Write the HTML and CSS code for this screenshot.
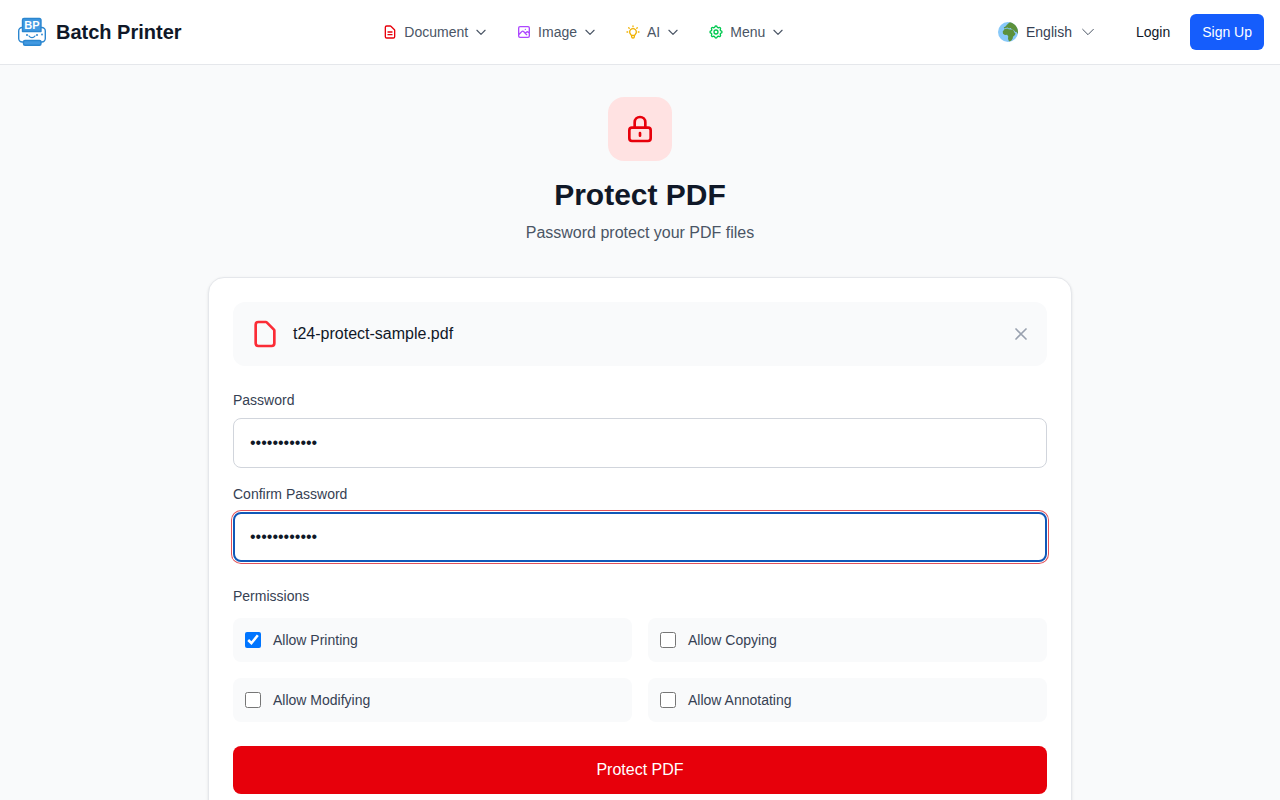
FILE: index.html
```html
<!DOCTYPE html>
<html lang="en">
<head>
    <meta charset="UTF-8">
    <meta name="viewport" content="width=device-width, initial-scale=1.0">
    <title>Protect PDF - Batch Printer</title>
    <link rel="stylesheet" href="styles.css">
</head>
<body>
    <header class="header">
        <a class="brand" href="#">
            <svg class="brand-logo" viewBox="0 0 32 32" fill="none" stroke="#2b86cf" stroke-width="1.4" stroke-linejoin="round" stroke-linecap="round" aria-hidden="true">
                <rect x="2.700" y="11.500" width="26.600" height="14.500" rx="3.500" fill="#fff"/>
                <path d="M6.500 15.500V4a1.500 1.500 0 0 1 1.500-1.500h15.500A1.500 1.500 0 0 1 25 4v11.500z" fill="#4299e1"/>
                <path d="M13 20c1.500 2.200 4.500 2.200 6 0" stroke-width="1.200"/>
                <g fill="#2b86cf" stroke="none">
                    <circle cx="11" cy="19" r="1"/>
                    <circle cx="21" cy="19" r="1"/>
                    <circle cx="26" cy="18.500" r=".9"/>
                </g>
                <rect x="7.500" y="24.500" width="17.500" height="4.800" rx="1.500" fill="#4299e1"/>
                <text class="logo-text" x="16" y="13" text-anchor="middle">BP</text>
            </svg>
            <span>Batch Printer</span>
        </a>

        <nav class="nav">
            <button class="nav-btn" type="button">
                <svg class="icon red" viewBox="0 0 24 24"><path d="M9 12h6m-6 4h6m2 5H7a2 2 0 0 1-2-2V5a2 2 0 0 1 2-2h5.600a1 1 0 0 1 .7.300l5.400 5.400a1 1 0 0 1 .3.700V19a2 2 0 0 1-2 2z"/></svg>
                <span>Document</span>
                <svg class="icon chevron" viewBox="0 0 24 24"><path d="M19 9l-7 7-7-7"/></svg>
            </button>
            <button class="nav-btn" type="button">
                <svg class="icon purple" viewBox="0 0 24 24"><path d="M4 16l4.600-4.600a2 2 0 0 1 2.800 0L16 16m-2-2 1.600-1.600a2 2 0 0 1 2.800 0L20 14M14 8h.01M6 20h12a2 2 0 0 0 2-2V6a2 2 0 0 0-2-2H6a2 2 0 0 0-2 2v12a2 2 0 0 0 2 2z"/></svg>
                <span>Image</span>
                <svg class="icon chevron" viewBox="0 0 24 24"><path d="M19 9l-7 7-7-7"/></svg>
            </button>
            <button class="nav-btn" type="button">
                <svg class="icon yellow" viewBox="0 0 24 24"><path d="M9.700 17h4.600M12 3v1m6.400 1.600-.7.700M21 12h-1M4 12H3m3.300-5.700-.7-.7m2.900 9.900a5 5 0 1 1 7 0l-.5.600a3.400 3.400 0 0 0-1 2.400v.5a2 2 0 1 1-4 0v-.5c0-.9-.4-1.800-1-2.400z"/></svg>
                <span>AI</span>
                <svg class="icon chevron" viewBox="0 0 24 24"><path d="M19 9l-7 7-7-7"/></svg>
            </button>
            <button class="nav-btn" type="button">
                <svg class="icon green" viewBox="0 0 24 24"><path d="M10.325 4.317c.426-1.756 2.924-1.756 3.350 0a1.724 1.724 0 0 0 2.573 1.066c1.543-.94 3.310.826 2.370 2.370a1.724 1.724 0 0 0 1.065 2.572c1.756.426 1.756 2.924 0 3.350a1.724 1.724 0 0 0-1.066 2.573c.94 1.543-.826 3.310-2.370 2.370a1.724 1.724 0 0 0-2.572 1.065c-.426 1.756-2.924 1.756-3.350 0a1.724 1.724 0 0 0-2.573-1.066c-1.543.94-3.310-.826-2.370-2.370a1.724 1.724 0 0 0-1.065-2.572c-1.756-.426-1.756-2.924 0-3.350a1.724 1.724 0 0 0 1.066-2.573c-.94-1.543.826-3.310 2.370-2.370.996.608 2.296.070 2.572-1.065z"/><circle cx="12" cy="12" r="3"/></svg>
                <span>Menu</span>
                <svg class="icon chevron" viewBox="0 0 24 24"><path d="M19 9l-7 7-7-7"/></svg>
            </button>
        </nav>

        <div class="account">
            <button class="lang-btn" type="button">
                <svg class="globe" viewBox="0 0 36 36" aria-hidden="true">
                    <circle cx="18" cy="18" r="18" fill="#88c9f9"/>
                    <path fill="#5c913b" d="M15 6.500l3-3.500 3.500-2.600c5.500 1.100 10.300 4.800 12.700 9.800 1.600 3.300 2.200 7.300 1.400 11.300l-2.600-4-2 .5-2.500-3.500-3.500-1-2-2.500-3.500.5-2-1.500-3.500 1-3 .5-.5-2 2.500-1z"/>
                    <path fill="#5c913b" d="M12 12.500l5-1 2 1.500 4.500.5 4 1 2 4.500 2 1.500-1 3-3.500 3-.5 3-2.500 4-3 1.500-2-1.500-1-4 .5-3.500-2-3-4 .3-3.500-2.300-.5-4z"/>
                </svg>
                <span>English</span>
                <svg class="icon chevron large" viewBox="0 0 24 24"><path d="M20 8l-8 8-8-8"/></svg>
            </button>
            <a class="login" href="#">Login</a>
            <a class="signup" href="#">Sign Up</a>
        </div>
    </header>

    <main class="main">
        <div class="intro">
            <div class="intro-icon">
                <svg class="icon" viewBox="0 0 24 24"><path d="M12 15v2m-6 4h12a2 2 0 0 0 2-2v-6a2 2 0 0 0-2-2H6a2 2 0 0 0-2 2v6a2 2 0 0 0 2 2zm10-10V7a4 4 0 0 0-8 0v4h8z"/></svg>
            </div>
            <h1>Protect PDF</h1>
            <p>Password protect your PDF files</p>
        </div>

        <form class="card">
            <div class="file-row">
                <svg class="icon file-icon" viewBox="0 0 24 24"><path d="M7 21h10a2 2 0 0 0 2-2V9.400a1 1 0 0 0-.3-.7l-5.400-5.400a1 1 0 0 0-.7-.3H7a2 2 0 0 0-2 2v14a2 2 0 0 0 2 2z"/></svg>
                <span class="file-name">t24-protect-sample.pdf</span>
                <button class="remove-btn" type="button" aria-label="Remove file">
                    <svg class="icon" viewBox="0 0 24 24"><path d="M6 18L18 6M6 6l12 12"/></svg>
                </button>
            </div>

            <div class="fields">
                <div class="field">
                    <label for="password">Password</label>
                    <input class="text-input" id="password" type="password" value="samplepass24">
                </div>
                <div class="field">
                    <label for="confirm">Confirm Password</label>
                    <input class="text-input focused" id="confirm" type="password" value="samplepass24">
                </div>
            </div>

            <fieldset class="permissions">
                <legend>Permissions</legend>
                <div class="permission-grid">
                    <label class="permission"><input type="checkbox" checked><span>Allow Printing</span></label>
                    <label class="permission"><input type="checkbox"><span>Allow Copying</span></label>
                    <label class="permission"><input type="checkbox"><span>Allow Modifying</span></label>
                    <label class="permission"><input type="checkbox"><span>Allow Annotating</span></label>
                </div>
            </fieldset>

            <button class="submit-btn" type="submit">Protect PDF</button>
        </form>
    </main>
</body>
</html>
```
FILE: styles.css
```css
:root {
    --bg: #f9fafb;
    --border: #e5e7eb;
    --text: #101828;
    --text-mid: #364153;
    --text-soft: #4a5565;
    --red: #e7000b;
    --blue: #155dfc;
}

* {
    box-sizing: border-box;
}

body {
    margin: 0;
    font-family: "Liberation Sans", Arial, sans-serif;
    font-size: 16px;
    line-height: 24px;
    color: var(--text);
    background-color: var(--bg);
}

button,
input {
    font: inherit;
    color: inherit;
}

button {
    border: none;
    background: none;
    padding: 0;
    cursor: pointer;
}

a {
    color: inherit;
    text-decoration: none;
}

.icon {
    width: 16px;
    height: 16px;
    flex-shrink: 0;
    fill: none;
    stroke: currentColor;
    stroke-width: 2;
    stroke-linecap: round;
    stroke-linejoin: round;
}

.red { color: #e7000b; }
.purple { color: #ad46ff; }
.yellow { color: #f0b100; }
.green { color: #00c950; }

/* header */
.header {
    display: flex;
    align-items: center;
    justify-content: space-between;
    height: 65px;
    padding: 0 16px;
    background-color: #fff;
    border-bottom: 1px solid var(--border);
}

.brand {
    display: flex;
    align-items: center;
    gap: 8px;
    font-size: 20px;
    font-weight: bold;
}

.brand-logo {
    width: 32px;
    height: 32px;
}

.logo-text {
    font-size: 11px;
    font-weight: bold;
    fill: #fff;
    stroke: none;
}

.nav {
    display: flex;
    gap: 28px;
}

.nav-btn,
.lang-btn {
    display: flex;
    align-items: center;
    font-size: 14px;
    line-height: 20px;
}

.nav-btn {
    gap: 6px;
    color: var(--text-soft);
}

.chevron {
    width: 14px;
    height: 14px;
    color: var(--text-soft);
}

.chevron.large {
    width: 16px;
    height: 16px;
    stroke-width: 1.5;
}

.account {
    display: flex;
    align-items: center;
    font-size: 14px;
    line-height: 20px;
}

.lang-btn {
    gap: 8px;
    margin-right: 28px;
    padding: 8px 12px;
    color: var(--text-mid);
}

.globe {
    width: 20px;
    height: 20px;
}

.login {
    margin-right: 20px;
}

.signup {
    padding: 8px 12px;
    border-radius: 6px;
    background-color: var(--blue);
    color: #fff;
}

/* page */
.main {
    max-width: 896px;
    margin: 0 auto;
    padding: 32px 16px;
}

.intro {
    display: flex;
    flex-direction: column;
    align-items: center;
    margin-bottom: 32px;
}

.intro-icon {
    display: flex;
    align-items: center;
    justify-content: center;
    width: 64px;
    height: 64px;
    margin-bottom: 16px;
    border-radius: 16px;
    background-color: #ffe2e2;
    color: var(--red);
}

.intro-icon .icon {
    width: 32px;
    height: 32px;
}

.intro h1 {
    margin: 0 0 8px;
    font-size: 30px;
    line-height: 36px;
}

.intro p {
    margin: 0;
    color: var(--text-soft);
}

.card {
    padding: 24px;
    border: 1px solid var(--border);
    border-radius: 16px;
    background-color: #fff;
    box-shadow: 0 1px 3px rgba(0, 0, 0, 0.1);
}

.file-row {
    display: flex;
    align-items: center;
    gap: 12px;
    margin-bottom: 24px;
    padding: 16px;
    border-radius: 12px;
    background-color: var(--bg);
}

.file-icon {
    width: 32px;
    height: 32px;
    color: #fb2c36;
}

.file-name {
    flex: 1;
}

.remove-btn {
    display: flex;
    color: #99a1af;
}

.remove-btn .icon {
    width: 20px;
    height: 20px;
}

.fields {
    display: grid;
    gap: 16px;
    margin-bottom: 24px;
}

.field label,
.permissions legend {
    display: block;
    margin-bottom: 8px;
    padding: 0;
    font-size: 14px;
    line-height: 20px;
    color: var(--text-mid);
}

.permissions legend {
    margin-bottom: 12px;
}

.text-input {
    display: block;
    width: 100%;
    height: 50px;
    padding: 12px 16px;
    border: 1px solid #d1d5dc;
    border-radius: 8px;
    outline: none;
    background-color: #fff;
}

.text-input.focused {
    border: 2px solid #1058b8;
    padding: 12px 15px;
    box-shadow: 0 0 0 1px #fff, 0 0 0 2px #e0525a;
}

.permissions {
    margin: 0 0 24px;
    padding: 0;
    border: none;
}

.permission-grid {
    display: grid;
    grid-template-columns: 1fr 1fr;
    gap: 16px;
}

.permission {
    display: flex;
    align-items: center;
    gap: 12px;
    padding: 12px;
    border-radius: 8px;
    background-color: var(--bg);
    font-size: 14px;
    line-height: 20px;
    color: var(--text-mid);
}

.permission input {
    width: 16px;
    height: 16px;
    margin: 0;
}

.submit-btn {
    width: 100%;
    padding: 12px;
    border-radius: 8px;
    background-color: var(--red);
    color: #fff;
}
```
